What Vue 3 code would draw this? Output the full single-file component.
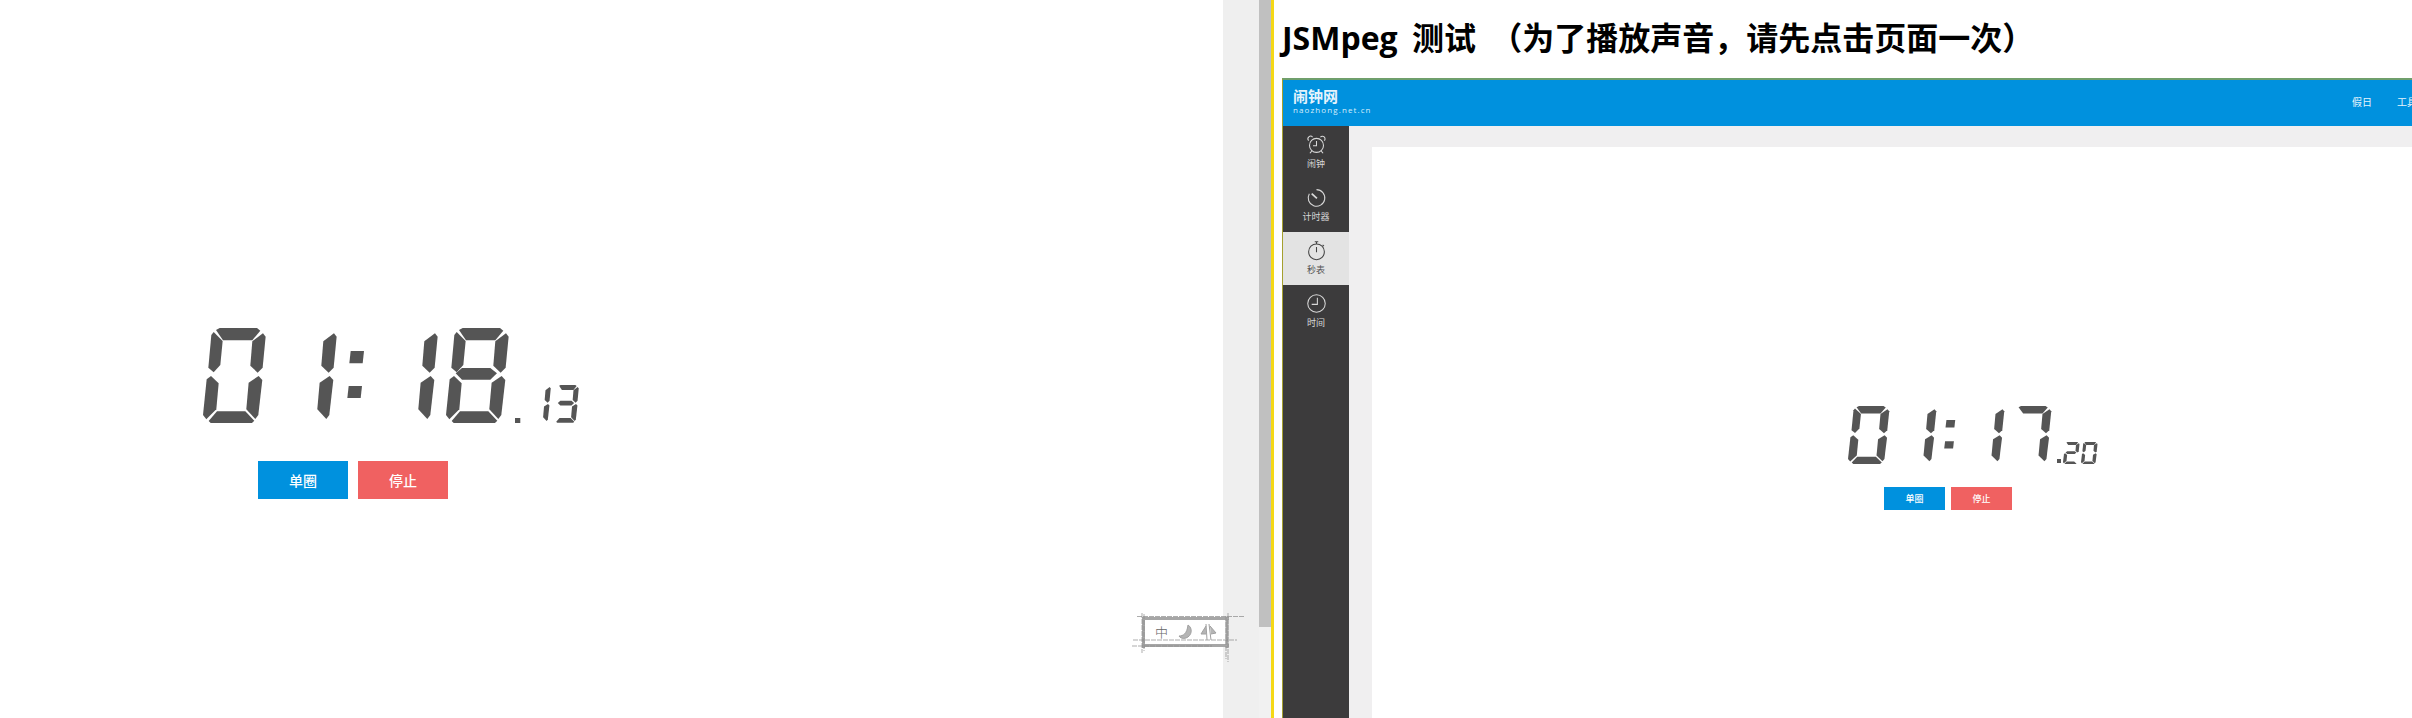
<template>
  <div class="screen">
    <section class="stage">
      <div class="clock clock-large">
        <svg
          v-for="(part, i) in leftClock"
          :key="i"
          :class="part.cls"
          :viewBox="viewBoxOf(part.ch)"
          preserveAspectRatio="none"
        >
          <polygon v-for="(pts, j) in shapesOf(part.ch)" :key="j" :points="pts" />
        </svg>
      </div>
      <div class="actions">
        <button class="btn btn-blue">单圈</button>
        <button class="btn btn-red">停止</button>
      </div>
    </section>

    <div class="gutter"></div>
    <div class="scrollbar"><div class="thumb"></div></div>
    <div class="rule"></div>

    <section class="page">
      <h1 class="title">JSMpeg 测试 （为了播放声音，请先点击页面一次）</h1>
      <div class="video">
        <header class="topbar">
          <div class="logo">
            <div class="logo-name">闹钟网</div>
            <div class="logo-url">naozhong.net.cn</div>
          </div>
          <nav class="nav">
            <span>假日</span>
            <span class="nav-clipped">工具</span>
          </nav>
        </header>
        <div class="body">
          <aside class="sidebar">
            <div class="menu-item">
              <svg class="menu-icon" viewBox="0 0 24 24">
                <circle cx="12" cy="13" r="8" />
                <path d="M12 8v5.500H8M3 7.500a3 3 0 0 1 4.500-4M21 7.500a3 3 0 0 0-4.500-4M6.500 19.500 4.500 22M17.500 19.500l2 2.500" />
              </svg>
              <span>闹钟</span>
            </div>
            <div class="menu-item">
              <svg class="menu-icon" viewBox="0 0 24 24">
                <path d="M12 3a9.500 9.500 0 1 1-8.200 4.700" />
                <path d="M6.500 7.500l6 5.500" stroke-width="2" />
              </svg>
              <span>计时器</span>
            </div>
            <div class="menu-item active">
              <svg class="menu-icon" viewBox="0 0 24 24">
                <circle cx="12" cy="13.500" r="9" />
                <path d="M10 2h4M12 2v2.500M19 5.500l1.500 1.500M12 8v6" />
              </svg>
              <span>秒表</span>
            </div>
            <div class="menu-item">
              <svg class="menu-icon" viewBox="0 0 24 24">
                <circle cx="12" cy="12" r="10" />
                <path d="M13 5.500V13H6.500" />
              </svg>
              <span>时间</span>
            </div>
          </aside>
          <main class="content">
            <div class="clock clock-small">
              <svg
                v-for="(part, i) in rightClock"
                :key="i"
                :class="part.cls"
                :viewBox="viewBoxOf(part.ch)"
                preserveAspectRatio="none"
              >
                <polygon v-for="(pts, j) in shapesOf(part.ch)" :key="j" :points="pts" />
              </svg>
            </div>
            <div class="actions actions-small">
              <button class="btn btn-blue">单圈</button>
              <button class="btn btn-red">停止</button>
            </div>
          </main>
        </div>
      </div>
    </section>

    <!-- floating input method toolbar -->
    <div class="ime">
      <svg class="ime-sketch" viewBox="0 0 114 50">
        <rect x="12" y="6" width="83" height="26" fill="#fff" />
        <g class="sketch-thick">
          <path d="M10 5.500H97M10 32.500H97M11.500 4V35M95 4V35" />
        </g>
        <g class="sketch-thin">
          <path d="M5 3.500H113M1 27H105M0 33H80M10 0V40M96 0V49M12 1V38M94 3V46" />
        </g>
        <path class="ime-glyph" d="M56 12c5 3 4 11-2 13-3 1-6 0-7-2 4 0 8-2 9-11z" />
        <path class="ime-glyph" d="M74 11l1 16M74 13l-5 8h5M77 11l2 16M78 13l6 7-5 1" />
      </svg>
      <span class="ime-zh">中</span>
    </div>
  </div>
</template>

<script setup>
const SEGMENTS = {
  a: '39,6 50,0 162,0 172,8 148,37 60,37',
  b: '180,16 188,26 179,119 164,134 142,113 148,40',
  c: '167,144 178,156 166,261 157,273 130,244 137,164',
  d: '42,250 127,250 154,278 146,286 24,286 17,279',
  e: '24,144 47,166 40,244 10,274 0,261 11,154',
  f: '32,12 59,39 52,111 32,133 16,119 25,21',
  g: '29,136 48,120 133,120 153,136 133,155 48,155'
};

const DIGITS = {
  0: 'abcdef',
  1: 'bc',
  2: 'abged',
  3: 'abgcd',
  7: 'abc',
  8: 'abcdefg'
};

const COLON = ['20,69 60,69 56,106 16,106', '14,174 54,174 50,210 10,210'];
const DOT = ['0,0 16,0 16,16 0,16'];

const shapesOf = (ch) => {
  if (ch === ':') return COLON;
  if (ch === '.') return DOT;
  return DIGITS[ch].split('').map((s) => SEGMENTS[s]);
};

const viewBoxOf = (ch) => {
  if (ch === ':') return '0 0 71 286';
  if (ch === '.') return '0 0 16 16';
  return '0 0 190 286';
};

const leftClock = [
  { ch: '0', cls: 'big' },
  { ch: '1', cls: 'big' },
  { ch: ':', cls: 'colon' },
  { ch: '1', cls: 'big' },
  { ch: '8', cls: 'big' },
  { ch: '.', cls: 'dot' },
  { ch: '1', cls: 'small' },
  { ch: '3', cls: 'small' }
];

const rightClock = [
  { ch: '0', cls: 'big' },
  { ch: '1', cls: 'big' },
  { ch: ':', cls: 'colon' },
  { ch: '1', cls: 'big' },
  { ch: '7', cls: 'big' },
  { ch: '.', cls: 'dot' },
  { ch: '2', cls: 'small' },
  { ch: '0', cls: 'small' }
];
</script>

<style>
html,
body {
  background: #fff;
  overflow: hidden;
}
</style>

<style scoped>
.screen {
  position: relative;
  display: flex;
  width: 2412px;
  height: 718px;
  overflow: hidden;
  background: #fff;
  font-family: "Open Sans", "Noto Sans CJK SC", sans-serif;
}

.stage {
  width: 1223px;
  flex-shrink: 0;
  padding: 328px 0 0 203px;
  box-sizing: border-box;
}

.clock {
  display: flex;
  align-items: flex-end;
}

.clock polygon {
  fill: #555;
}

.clock-large .big {
  width: 63.3px;
  height: 95.3px;
  margin-right: 7.3px;
}

.clock-large .colon {
  width: 23.7px;
  height: 95.3px;
  margin-right: 7.3px;
}

.clock-large .dot {
  width: 5.3px;
  height: 5.3px;
  margin-left: -1px;
}

.clock-large .small {
  width: 25px;
  height: 37.7px;
  margin-left: 5.7px;
  margin-bottom: 0.7px;
}

.clock-large .small:last-child {
  margin-left: 3px;
}

.actions {
  display: flex;
  gap: 10px;
  margin: 38px 0 0 55px;
}

.btn {
  width: 90px;
  height: 38px;
  padding: 0;
  border: none;
  color: #fff;
  font-family: inherit;
  font-size: 14px;
  font-weight: 500;
}

.btn-blue {
  background: #0091de;
}

.btn-red {
  background: #f06161;
}

.gutter {
  width: 36px;
  flex-shrink: 0;
  background: #efefef;
}

.scrollbar {
  width: 12px;
  flex-shrink: 0;
  background: #f1f1f1;
}

.thumb {
  height: 627px;
  background: #c0c0c0;
}

.rule {
  width: 3px;
  flex-shrink: 0;
  background: #f5d816;
}

.page {
  flex: 1;
  min-width: 0;
  padding-left: 8px;
}

.title {
  height: 78px;
  margin: 0;
  padding-top: 16px;
  box-sizing: border-box;
  color: #000;
  font-size: 32px;
  font-weight: 700;
  line-height: 44px;
  white-space: nowrap;
  word-spacing: 6px;
}

.video {
  display: flex;
  flex-direction: column;
  height: 640px;
  border-top: 2px solid #6f9f6c;
  border-left: 1px solid #a5a02e;
}

.topbar {
  display: flex;
  justify-content: space-between;
  height: 46px;
  flex-shrink: 0;
  padding-left: 10px;
  background: #0091de;
  color: #fff;
}

.logo {
  padding-top: 8px;
}

.logo-name {
  font-size: 15px;
  font-weight: 700;
  line-height: 17px;
  color: #e6f4fc;
}

.logo-url {
  font-size: 8px;
  line-height: 10px;
  letter-spacing: 1.1px;
  color: #d8eefa;
  white-space: nowrap;
}

.nav {
  display: flex;
  gap: 25px;
  padding-top: 15px;
  font-size: 10px;
  line-height: 14px;
  color: #e6f4fc;
}

.nav span {
  white-space: nowrap;
}

.nav-clipped {
  width: 15px;
  overflow: hidden;
}

.body {
  display: flex;
  flex: 1;
  min-height: 0;
  background: #f0eff0;
}

.sidebar {
  width: 66px;
  flex-shrink: 0;
  background: #3c3b3c;
}

.menu-item {
  display: flex;
  flex-direction: column;
  align-items: center;
  height: 53px;
  padding-top: 8px;
  box-sizing: border-box;
  color: #d8d8d8;
  font-size: 9px;
  line-height: 12px;
}

.menu-icon {
  width: 21px;
  height: 21px;
  margin-bottom: 3px;
  fill: none;
  stroke: #d8d8d8;
  stroke-width: 1.2;
}

.menu-item.active {
  background: #e3e3e3;
  color: #555;
}

.menu-item.active .menu-icon {
  stroke: #444;
}

.content {
  flex: 1;
  margin: 21px 0 0 23px;
  padding: 259px 0 0 476px;
  background: #fff;
}

.clock-small .big {
  width: 41.7px;
  height: 58px;
  margin-right: 5.4px;
  flex-shrink: 0;
}

.clock-small .colon {
  width: 15.7px;
  height: 58px;
  margin-right: 5.4px;
  flex-shrink: 0;
}

.clock-small .dot {
  width: 4.7px;
  height: 4.7px;
  margin-left: -0.7px;
  margin-bottom: 0.7px;
}

.clock-small .small {
  width: 16.7px;
  height: 22.3px;
  margin-left: 1.7px;
}

.actions-small {
  gap: 6px;
  margin: 23px 0 0 36px;
}

.actions-small .btn {
  width: 61px;
  height: 23px;
  font-size: 9px;
}

.ime {
  position: absolute;
  left: 1132px;
  top: 613px;
  width: 114px;
  height: 50px;
}

.ime-sketch {
  display: block;
  width: 114px;
  height: 50px;
  filter: blur(0.4px);
}

.sketch-thick path {
  fill: none;
  stroke: #a6a6a6;
  stroke-width: 3;
}

.sketch-thin path {
  fill: none;
  stroke: #8a8a8a;
  stroke-width: 0.7;
  stroke-dasharray: 5 1;
}

.ime-glyph {
  fill: #b5b5b5;
  stroke: #a0a0a0;
  stroke-width: 1;
}

.ime-zh {
  position: absolute;
  left: 23px;
  top: 9px;
  color: #666;
  font-size: 13px;
  font-weight: 300;
  line-height: 20px;
}
</style>
